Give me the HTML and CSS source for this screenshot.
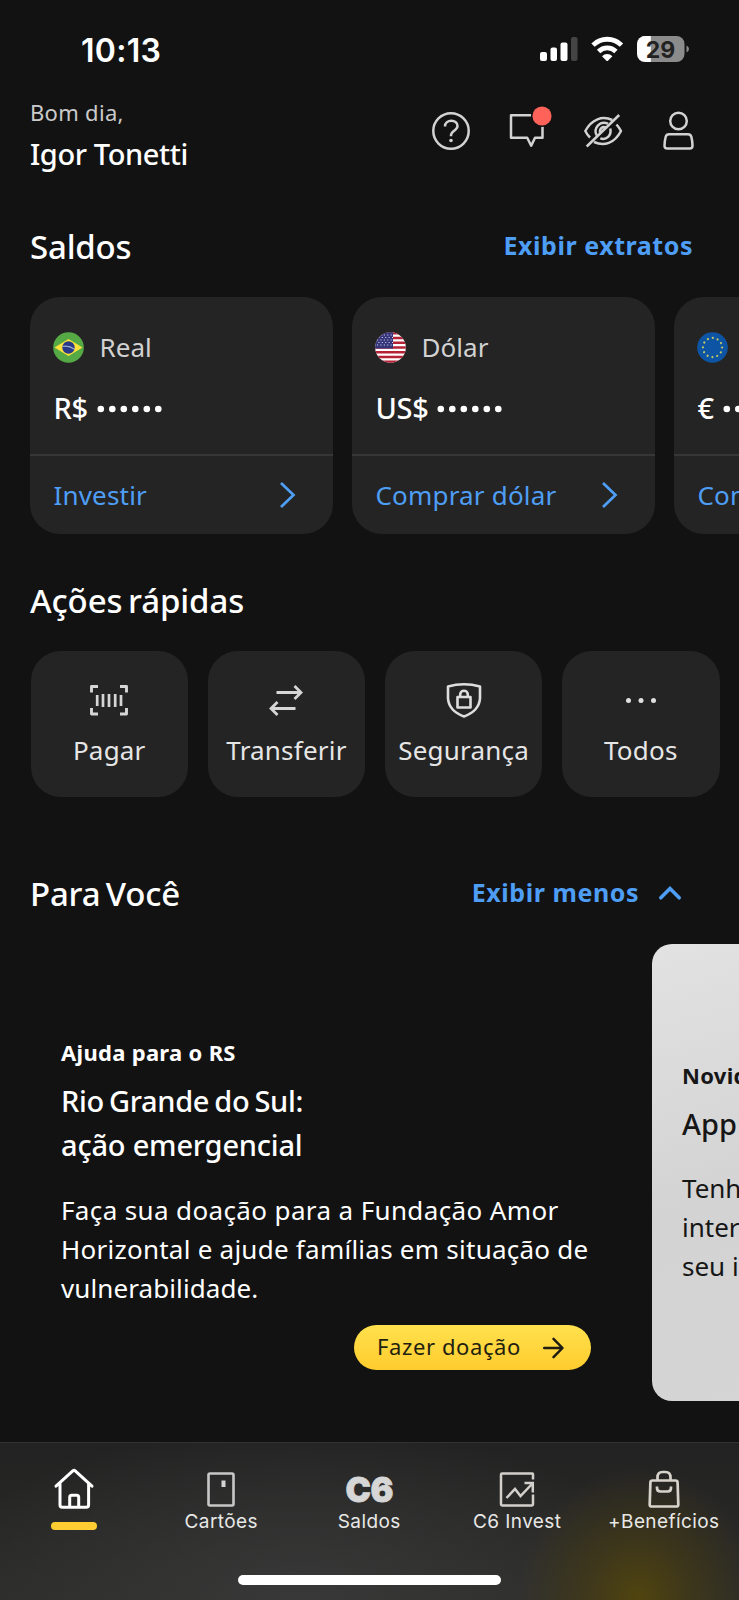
FILE: index.html
```html
<!DOCTYPE html>
<html lang="pt-BR">
<head>
<meta charset="utf-8">
<title>C6 Bank</title>
<link rel="stylesheet" href="styles.css">
</head>
<body>
<div class="app">
  <div class="status">
    <span class="clock">10:13</span>
    <svg class="status-icons" width="150" height="28" viewBox="0 0 150 28">
      <g fill="#fff">
        <rect x="0" y="16" width="7" height="9" rx="2"/>
        <rect x="10.500" y="11.500" width="6.500" height="13.500" rx="2"/>
        <rect x="20.500" y="6.500" width="7" height="18.500" rx="2"/>
        <rect x="31" y="1" width="6.500" height="24" rx="2" fill="#444"/>
      </g>
      <g fill="none" stroke="#fff" stroke-width="4.800">
        <path d="M53 9.100a20.300 20.300 0 0 1 28.500 0"/>
        <path d="M58.600 15.500a12.300 12.300 0 0 1 17.300 0"/>
      </g>
      <path d="M62 20.200a7.500 7.500 0 0 1 10.400 0l-4.200 4.200q-1 1-2 0z" fill="#fff"/>
      <path d="M105 0h34.500a8 8 0 0 1 8 8v10a8 8 0 0 1-8 8H110z" transform="translate(-3)" fill="#8b8b8b"/>
      <path d="M110.800 0v26H105a8 8 0 0 1-8-8V8a8 8 0 0 1 8-8z" fill="#fff"/>
      <path d="M146.500 9.500q2.500 1 2.500 3.500t-2.500 3.500z" fill="#8b8b8b"/>
      <text x="120.500" y="21.500" text-anchor="middle" class="battery">29</text>
    </svg>
  </div>

  <header class="header">
    <div class="hello">
      <div class="greet">Bom dia,</div>
      <div class="name">Igor Tonetti</div>
    </div>
    <svg class="tools" width="264" height="46" viewBox="0 0 264 46" fill="none" stroke="#d2d2d2" stroke-width="2.500" stroke-linejoin="round">
      <circle cx="19" cy="26" r="17.700"/>
      <path d="M13 21.500c0-7.500 12.500-7.500 12.500-.5 0 4.500-6.500 4.800-6.500 9.200v1"/>
      <circle cx="19" cy="35.500" r="1.800" fill="#d2d2d2" stroke="none"/>
      <path d="M79 10.200h31.500v22.600H103l-3.800 8-4-8H79z"/>
      <circle cx="110" cy="11" r="11" fill="#121212" stroke="none"/>
      <circle cx="110" cy="11" r="9.600" fill="#ff6259" stroke="none"/>
      <path d="M158 32.500q-2.700-2.500-4.700-6.500c6.500-12 17-15.500 27-11M184.500 19.500q2.500 2.800 4.500 6.500c-6.500 12.500-17 15.500-27 11"/>
      <path d="M164.800 30.500c-4-7 3-15.500 11.200-11.800M178.300 23.500c1.500 7-4 12-10 9.900M168 27.500c-.5-4 2.500-6.500 6-4.800"/>
      <path d="M154.700 41.500 187.200 10"/>
      <circle cx="246.500" cy="16" r="8.300"/>
      <path d="M237 29.200h19q2.600 0 3.300 2.500 1.200 4.500 1.200 9 0 2.800-2.800 2.800h-22.400q-2.800 0-2.800-2.800 0-4.500 1.200-9 .7-2.500 3.300-2.500z"/>
    </svg>
  </header>

  <div class="section balances-head">
    <h2 class="saldos">Saldos</h2>
    <a class="link extratos">Exibir extratos</a>
  </div>

  <div class="balances">
    <article class="balance">
      <div class="currency">
        <svg width="31" height="31" viewBox="0 0 31 31"><circle cx="15.500" cy="15.500" r="15.300" fill="#56aa45"/><path d="M1.500 15.500 15.500 7 29.500 15.500 15.500 24z" fill="#fee13a"/><circle cx="15.500" cy="15.500" r="6.200" fill="#293a88"/><path d="M9.500 14.500q6-1.500 12 2.800" stroke="#9fb0cc" stroke-width="1.200" fill="none"/></svg>
        <span class="real">Real</span>
      </div>
      <div class="amount"><span>R$</span><svg width="66" height="8" viewBox="0 0 66 8" fill="#fff"><circle cx="3.800" cy="4" r="3.300"/><circle cx="15.300" cy="4" r="3.300"/><circle cx="26.800" cy="4" r="3.300"/><circle cx="38.300" cy="4" r="3.300"/><circle cx="49.800" cy="4" r="3.300"/><circle cx="61.300" cy="4" r="3.300"/></svg></div>
      <div class="action"><span class="investir">Investir</span><svg width="18" height="28" viewBox="0 0 18 28"><path d="M2 2l12.500 12L2 26" fill="none" stroke="#4e9ef5" stroke-width="2.700"/></svg></div>
    </article>
    <article class="balance">
      <div class="currency">
        <svg width="31" height="31" viewBox="0 0 31 31"><defs><clipPath id="us"><circle cx="15.500" cy="15.500" r="15.300"/></clipPath></defs>
          <g clip-path="url(#us)"><path fill="#fff" d="M0 0h31v31H0z"/><path d="M0 1.300h31M0 6h31M0 10.700h31M0 15.500h31M0 20.200h31M0 25h31M0 29.700h31" stroke="#b32237" stroke-width="2.400"/><path fill="#34357b" d="M0 0h18v16.500H0z"/><path d="M2 3h16M0 5.500h18M2 8h16M0 10.500h18M2 13h16" stroke="#d5d5ec" stroke-width="1.100" stroke-dasharray="1.100 2.300"/></g></svg>
        <span class="dolar">Dólar</span>
      </div>
      <div class="amount"><span class="usd">US$</span><svg width="66" height="8" viewBox="0 0 66 8" fill="#fff"><circle cx="3.800" cy="4" r="3.300"/><circle cx="15.300" cy="4" r="3.300"/><circle cx="26.800" cy="4" r="3.300"/><circle cx="38.300" cy="4" r="3.300"/><circle cx="49.800" cy="4" r="3.300"/><circle cx="61.300" cy="4" r="3.300"/></svg></div>
      <div class="action"><span class="comprar">Comprar dólar</span><svg width="18" height="28" viewBox="0 0 18 28"><path d="M2 2l12.500 12L2 26" fill="none" stroke="#4e9ef5" stroke-width="2.700"/></svg></div>
    </article>
    <article class="balance">
      <div class="currency">
        <svg width="31" height="31" viewBox="0 0 31 31"><circle cx="15.500" cy="15.500" r="15.300" fill="#0d55a4"/><circle cx="15.500" cy="15.500" r="9.600" fill="none" stroke="#c5cb62" stroke-width="2.200" stroke-linecap="round" stroke-dasharray="0.010 5.016"/></svg>
      </div>
      <div class="amount"><span class="eur">€</span><svg width="66" height="8" viewBox="0 0 66 8" fill="#fff"><circle cx="3.800" cy="4" r="3.300"/><circle cx="15.300" cy="4" r="3.300"/><circle cx="26.800" cy="4" r="3.300"/><circle cx="38.300" cy="4" r="3.300"/><circle cx="49.800" cy="4" r="3.300"/><circle cx="61.300" cy="4" r="3.300"/></svg></div>
      <div class="action"><span class="comprar">Comprar euro</span></div>
    </article>
  </div>

  <div class="section quick-head"><h2 class="acoes">Ações rápidas</h2></div>
  <div class="quick">
    <div class="tile">
      <svg width="40" height="40" viewBox="0 0 40 40" fill="none" stroke="#d6d6d6" stroke-width="2.900" stroke-linejoin="round"><path d="M2.500 12.500v-6h6.500M31 6.500h6.500v6M37.500 28v6H31M9 34H2.500v-6"/><path d="M8.200 15v11M14 14v13M20 14v13M26.200 14v13M32 15v11" stroke-width="2.700"/></svg>
      <span class="pagar">Pagar</span>
    </div>
    <div class="tile">
      <svg width="40" height="40" viewBox="0 0 40 40" fill="none" stroke="#d6d6d6" stroke-width="2.800"><path d="M10.500 12.500h25M28.500 6l6.500 6.500-6.500 6.500M29.500 28.500h-25M11.500 22 5 28.500l6.500 6.500"/></svg>
      <span class="transferir">Transferir</span>
    </div>
    <div class="tile">
      <svg width="40" height="40" viewBox="0 0 40 40" fill="none" stroke="#dedede" stroke-width="2.600" stroke-linejoin="round"><path d="M4 6.500q16-4.500 32 0v12Q35 31 20 36.500 5 31 4 18.500z"/><path d="M13.500 17h13v10.500h-13zM16.200 17v-2.500c0-5 7.600-5 7.600 0V17"/></svg>
      <span class="seguranca">Segurança</span>
    </div>
    <div class="tile">
      <svg width="40" height="40" viewBox="0 0 40 40" fill="#e0e0e0"><circle cx="7.500" cy="20.500" r="2.500"/><circle cx="20" cy="20.500" r="2.500"/><circle cx="32.500" cy="20.500" r="2.500"/></svg>
      <span class="todos">Todos</span>
    </div>
  </div>

  <div class="section foryou-head">
    <h2 class="voce">Para Você</h2>
    <a class="link menos">Exibir menos<svg width="22" height="14" viewBox="0 0 22 14"><path d="M1.800 11.800 11 2.600l9.200 9.200" fill="none" stroke="#4e9ef5" stroke-width="3.600" stroke-linecap="round"/></svg></a>
  </div>

  <div class="feed">
    <article class="promo">
      <div class="tag">Ajuda para o RS</div>
      <h3 class="promo-title"><span class="rio">Rio Grande do Sul:</span><br><span class="acao">ação emergencial</span></h3>
      <p class="copy"><span class="l1">Faça sua doação para a Fundação Amor</span><br><span class="l2">Horizontal e ajude famílias em situação de</span><br><span class="l3">vulnerabilidade.</span></p>
      <div class="cta"><span>Fazer doação</span><svg width="21" height="22" viewBox="0 0 21 22"><path d="M1.200 11h18M10.500 1.800l9 9.200-9 9.200" fill="none" stroke="#1d1b12" stroke-width="2.500" stroke-linejoin="round" stroke-linecap="round"/></svg></div>
    </article>
    <article class="news">
      <div class="tag">Novidade</div>
      <h3 class="promo-title">App</h3>
      <p class="copy">Tenha<br>internet<br>seu iPhone</p>
    </article>
  </div>

  <nav class="nav">
    <div class="tab home">
      <svg width="40" height="42" viewBox="0 0 40 42" fill="none" stroke="#fff" stroke-width="3" stroke-linejoin="round" stroke-linecap="round"><path d="M2 18.200 18.800 2.800q1.200-1 2.400 0L38 18.200M6 15.500v21.500q0 2.300 2.300 2.300h24q2.300 0 2.300-2.300v-21.500M15.700 38.500v-9.300q0-2 2-2h5q2 0 2 2v9.300"/></svg>
      <i class="active"></i>
    </div>
    <div class="tab">
      <svg width="40" height="42" viewBox="0 0 40 42"><rect x="7.500" y="8.500" width="25" height="32" rx="1.500" fill="none" stroke="#c8c8c8" stroke-width="2.600"/><rect x="20.500" y="15.500" width="4" height="6.500" fill="#d4d4d4"/></svg>
      <span class="t2">Cartões</span>
    </div>
    <div class="tab middle">
      <span class="logo">C6</span>
      <span class="t3">Saldos</span>
    </div>
    <div class="tab shifted">
      <svg width="40" height="42" viewBox="0 0 40 42" fill="none" stroke="#d3d0cc" stroke-width="2.500"><path d="M36 14.500V9.200q0-.7-.7-.7H5.200Q4 8.500 4 9.700v29.600q0 1.200 1.200 1.200h29.600q1.200 0 1.200-1.200V29.500"/><path d="M9.500 33l8.500-9 5.500 7L34.500 19.500M27.500 18h8.300v9.500"/></svg>
      <span class="t4">C6 Invest</span>
    </div>
    <div class="tab">
      <svg width="40" height="42" viewBox="0 0 40 42" fill="none" stroke="#d8d3ca" stroke-width="2.700" stroke-linejoin="round"><path d="M8.500 15.500h23q2 0 2.100 2l.7 22q.1 2-2 2H7.700q-2.100 0-2-2l.7-22q.1-2 2.100-2z"/><path d="M13.500 15.500v-3q0-5.500 5-5.500h3q5 0 5 5.500v3M13 21.500v1.500q0 3.500 3.500 3.500h7q3.500 0 3.500-3.500v-1.500"/></svg>
      <span class="t5">+Benefícios</span>
    </div>
    <i class="home-indicator"></i>
  </nav>
</div>
</body>
</html>
```
FILE: styles.css
```css
* { box-sizing: border-box; }
body { margin: 0; background: #121212; color: #fff; font-family: "Noto Sans", sans-serif; }
h2, h3, p { margin: 0; font-weight: 500; }
svg { display: block; flex: none; overflow: visible; }
.app { width: 739px; height: 1600px; overflow: hidden; display: flex; flex-direction: column; white-space: nowrap; }
.status { height: 92px; flex: none; display: flex; justify-content: space-between; align-items: flex-start; padding: 36px 49px 0 81px; }
.clock { font: 600 32px/27px Inter, sans-serif; letter-spacing: 0.3px; margin-top: 1px; }
.battery { font: 700 23px Inter, sans-serif; fill: #222; }
.header { height: 106px; flex: none; display: flex; justify-content: space-between; padding: 0 43px 0 30px; }
.greet { font-size: 22px; line-height: 30px; margin-top: 5px; color: #cacaca; letter-spacing: 0.3px; }
.name { font-size: 29px; line-height: 40px; margin-top: 7px; font-weight: 500; letter-spacing: -0.4px; }
.tools { margin-top: 13px; }
.section { display: flex; justify-content: space-between; flex: none; padding-left: 30px; }
.section h2 { font-size: 33px; line-height: 46px; }
.section .saldos { letter-spacing: -0.2px; }
.section .acoes { letter-spacing: -0.1px; word-spacing: -3px; }
.section .voce { letter-spacing: -0.2px; word-spacing: -3px; }
.link { font-weight: 700; font-size: 25px; line-height: 34px; color: #4e9ef5; letter-spacing: 0.55px; }
.balances-head { height: 99px; padding-top: 26px; padding-right: 46px; }
.extratos { margin-top: 4px; }
.balances { display: flex; flex: none; gap: 19px; padding-left: 30.400px; height: 237px; }
.balance { flex: none; width: 303px; height: 237px; border-radius: 30px; background: #242424; overflow: hidden; }
.currency { height: 72px; padding: 34px 0 0 23px; display: flex; gap: 15px; font-size: 26px; line-height: 32px; color: #d2d2d2; letter-spacing: 0.1px; }
.currency svg { margin-top: 1px; }
.amount { height: 85px; padding: 19px 0 0 23px; display: flex; gap: 9px; font-size: 29px; line-height: 40px; font-weight: 500; letter-spacing: -0.3px; }
.amount svg { margin-top: 17px; }
.action { height: 80px; border-top: 2px solid #363636; display: flex; justify-content: space-between; align-items: center; padding: 0 36px 1px 23px; font-size: 26px; line-height: 36px; color: #4e9ef5; letter-spacing: 0.2px; }
.quick-head { height: 117px; padding-top: 44px; }
.quick { display: flex; flex: none; gap: 19.700px; height: 146px; padding-left: 30.500px; }
.tile { flex: none; width: 157.500px; height: 146px; border-radius: 30px; background: #242424; display: flex; flex-direction: column; align-items: center; padding-top: 29px; font-size: 26px; line-height: 36px; color: #e6e6e6; letter-spacing: 0.2px; }
.tile span { margin-top: 12px; }
.foryou-head { height: 147px; padding-top: 74px; padding-right: 58px; }
.menos { display: flex; gap: 20px; margin-top: 4px; }
.menos svg { margin-top: 11px; }
.feed { height: 498px; flex: none; display: flex; }
.promo { width: 652px; flex: none; padding: 93px 61px 0 61px; }
.news { width: 587px; height: 457px; flex: none; border-radius: 20px; padding: 116px 31px 0 30px; background: linear-gradient(165deg, #e2e2e2, #d3d3d3 45%, #d6d6d6); color: #161616; }
.tag { font-size: 22px; line-height: 30px; font-weight: 700; letter-spacing: 0.3px; }
.promo-title { font-size: 29px; line-height: 43.500px; margin-top: 12px; }
.rio { letter-spacing: -0.35px; word-spacing: -2px; }
.acao { letter-spacing: -0.2px; }
.copy { font-size: 26px; line-height: 39px; margin-top: 25px; font-weight: 400; }
.news .copy { margin-top: 23px; }
.l1 { letter-spacing: 0.37px; }
.l2 { letter-spacing: 0.25px; }
.l3 { letter-spacing: 0.1px; }
.cta { width: 237px; height: 45px; border-radius: 23px; margin: 17px 0 0 auto; background: linear-gradient(#ffe14d, #ffcc2e); color: #231f10; font-size: 22px; line-height: 43px; letter-spacing: 0.6px; display: flex; align-items: center; gap: 22px; padding-left: 23px; }
.cta span { margin-top: -2px; }
.nav { height: 158px; flex: none; position: relative; border-top: 1px solid #323230; display: grid; grid-template-columns: repeat(5, 147.500px); background: radial-gradient(ellipse 120px 130px at 638px 155px, #50440f, rgba(70,60,20,.65) 45%, rgba(50,46,30,0)), radial-gradient(ellipse 370px 180px at 300px 158px, #383838, rgba(40,40,40,0)), linear-gradient(#222, #2c2c2a); }
.tab { display: flex; flex-direction: column; align-items: center; padding-top: 22px; font: 400 19px/26px Inter, sans-serif; letter-spacing: .4px; color: #e8e8e6; }
.tab span { margin-top: 2px; }
.tab .logo { height: 42px; margin-top: 0; padding-top: 4px; font-size: 34px; line-height: 42px; font-weight: 900; letter-spacing: -0.5px; color: #d6d6d6; -webkit-text-stroke: 0.8px #d6d6d6; }
.middle { padding-left: 1px; }
.shifted { padding-left: 2px; }
.home { padding-top: 25px; }
.active { width: 46px; height: 8px; border-radius: 4px; background: #ffcc32; margin-top: 12px; }
.home-indicator { position: absolute; left: 238px; top: 132px; width: 263px; height: 10px; border-radius: 5px; background: #fff; }
```
